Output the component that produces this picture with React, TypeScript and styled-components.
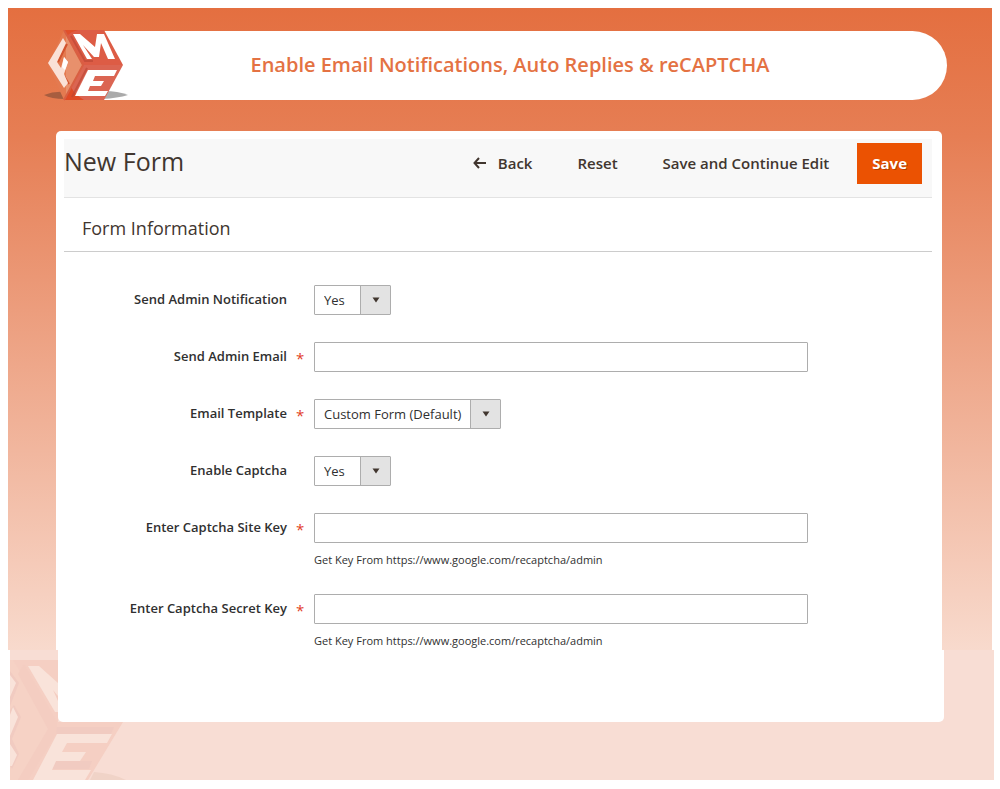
import React from "react";
import styled, { createGlobalStyle } from "styled-components";

const GlobalStyle = createGlobalStyle`
  *, *::before, *::after { box-sizing: border-box; }
  body {
    margin: 0;
    background: #fff;
    font-family: "Open Sans", "Noto Sans", sans-serif;
    font-size: 13px;
    color: #303030;
  }
  h1, h2, p { margin: 0; font-weight: 400; }
  button, input, select { font: inherit; color: inherit; }
`;

const Page = styled.div`
  padding: 8px 0 9px;
`;

const Backdrop = styled.section`
  margin: 0 8px;
  padding: 22px 50px 0 48px;
  background: linear-gradient(#e46f40, #e67e54 20%, #f8dacd);
`;

const Banner = styled.header`
  display: grid;
  grid-template-columns: 1fr;
  margin: 0 0 30px -12px;
`;

const Pill = styled.div`
  grid-area: 1 / 1;
  display: flex;
  align-items: center;
  justify-content: center;
  margin: 1px -5px 0 21px;
  height: 69px;
  padding: 0 0 2px 8px;
  border-radius: 35px;
  background: #fff;
`;

const BannerTitle = styled.h1`
  && { font-weight: 600; }
  font-size: 20px;
  line-height: 28px;
  color: #e47243;
`;

const Logo = styled.svg`
  grid-area: 1 / 1;
  display: block;
  width: 84px;
  height: 71px;
`;

const Panel = styled.main`
  min-height: 519px;
  padding: 8px 10px 0 8px;
  border-radius: 5px 5px 0 0;
  background: #fff;
`;

const Toolbar = styled.div`
  display: flex;
  justify-content: space-between;
  height: 59px;
  padding: 4px 10px 0 0;
  border-bottom: 1px solid #e3e3e3;
  background: #f8f8f8;
`;

const PageTitle = styled.h2`
  font-size: 25px;
  line-height: 36px;
  color: #41362f;
`;

const Actions = styled.div`
  display: flex;
  align-items: flex-start;
`;

const Action = styled.button<{ $primary?: boolean }>`
  display: flex;
  align-items: center;
  gap: 12px;
  height: 41px;
  margin-left: ${(p) => (p.$primary ? "13px" : "15px")};
  padding: 0 14px 2px;
  border: 1px solid ${(p) => (p.$primary ? "#eb5202" : "transparent")};
  background: ${(p) => (p.$primary ? "#eb5202" : "transparent")};
  color: ${(p) => (p.$primary ? "#fff" : "#41362f")};
  font-size: 15px;
  font-weight: ${(p) => (p.$primary ? 700 : 600)};
  text-shadow: ${(p) => (p.$primary ? "1px 1px 0 rgba(0,0,0,.25)" : "none")};
  cursor: pointer;
`;

const SectionTitle = styled.h2`
  padding: 16px 18px 9px;
  border-bottom: 1px solid #ccc;
  font-size: 18px;
  line-height: 28px;
  color: #41362f;
`;

const Form = styled.form`
  display: grid;
  gap: 27px;
  padding: 33px 0 0;
`;

const Row = styled.div`
  display: grid;
  grid-template-columns: 223px minmax(0, 494px);
  column-gap: 27px;
`;

const Label = styled.label<{ $required?: boolean }>`
  position: relative;
  line-height: 29px;
  text-align: right;
  font-weight: 600;

  &::after {
    content: ${(p) => (p.$required ? '"*"' : "none")};
    position: absolute;
    left: calc(100% + 9px);
    top: 2px;
    color: #e2401f;
    font-size: 15px;
    font-weight: 400;
  }
`;

const TextInput = styled.input`
  display: block;
  width: 100%;
  height: 30px;
  padding: 0 9px;
  border: 1px solid #adadad;
  border-radius: 1px;
  background: #fff;
`;

const SelectBox = styled.div`
  position: relative;
  display: inline-block;
  vertical-align: top;
`;

const Select = styled.select`
  display: block;
  appearance: none;
  min-width: 77px;
  height: 30px;
  padding: 0 38px 1px 9px;
  border: 1px solid #adadad;
  border-radius: 1px;
  background: linear-gradient(#adadad, #adadad) right 29px top / 1px 100% no-repeat,
    linear-gradient(#e3e3e3, #e3e3e3) right / 29px 100% no-repeat, #fff;
`;

const Caret = styled.svg`
  position: absolute;
  right: 11px;
  top: 12px;
  width: 8px;
  height: 6px;
  pointer-events: none;
`;

const Note = styled.p`
  margin-top: 9px;
  font-size: 11px;
  line-height: 15px;
`;

const Footer = styled.section`
  position: relative;
  margin: 0 6px 0 10px;
  padding: 0 50px 58px 48px;
  background: #f8ddd4;
`;

const PanelEnd = styled.div`
  position: relative;
  height: 72px;
  border-radius: 0 0 5px 5px;
  background: #fff;
`;

const Watermark = styled.svg`
  position: absolute;
  left: 0;
  bottom: 0;
  width: 120px;
  height: 130px;
`;

function SelectField({ id, options }: { id: string; options: string[] }) {
  return (
    <SelectBox>
      <Select id={id} defaultValue={options[0]}>
        {options.map((o) => (
          <option key={o}>{o}</option>
        ))}
      </Select>
      <Caret viewBox="0 0 8 6" aria-hidden="true">
        <path d="M.5.5h7L4 5.5z" fill="#41362f" />
      </Caret>
    </SelectBox>
  );
}

interface Field {
  id: string;
  label: string;
  required?: boolean;
  options?: string[];
  note?: string;
}

const keyNote = "Get Key From https://www.google.com/recaptcha/admin";

const fields: Field[] = [
  { id: "notify", label: "Send Admin Notification", options: ["Yes"] },
  { id: "email", label: "Send Admin Email", required: true },
  { id: "template", label: "Email Template", required: true, options: ["Custom Form (Default)"] },
  { id: "captcha", label: "Enable Captcha", options: ["Yes"] },
  { id: "site-key", label: "Enter Captcha Site Key", required: true, note: keyNote },
  { id: "secret-key", label: "Enter Captcha Secret Key", required: true, note: keyNote },
];

export default function App() {
  return (
    <>
      <GlobalStyle />
      <Page>
        <Backdrop>
          <Banner>
            <Pill>
              <BannerTitle>Enable Email Notifications, Auto Replies &amp; reCAPTCHA</BannerTitle>
            </Pill>
            <Logo viewBox="44 30 84 71" aria-hidden="true">
              <path d="M44 95q10-4 21-3v7q-14 0-21-4z" fill="#8d5139" opacity=".7" />
              <path d="M104 91q14 0 24 4-10 3-26 4z" fill="#8d8d8d" opacity=".75" />
              <path d="M64 30 83 65 64 100 48 65z" fill="#e47a50" />
              <path d="M64 30 83 65 66 96V34z" fill="#e8906c" />
              <path d="M64 30h40l19 35H83z" fill="#dd5c45" />
              <path d="M64 30h14q-8 2-11 6z" fill="#e0502b" />
              <path d="M83 65h40l-19 35H64z" fill="#db6552" />
              <path d="M64 100l7-13q4 8 13 13z" fill="#df4a26" />
              <path d="M64 30 83 65 64 100" fill="none" stroke="#d95f42" strokeWidth="2" />
              <path d="M71 36 85 61h8M87 68 72 97" fill="none" stroke="#b94434" strokeWidth="2" opacity=".6" />
              <path d="M73 34h7l15 13 2-13h7l11 25h-7l-7-16-2 14h-5L83 45l9 14h-5z" fill="#fff" />
              <path d="M88 70h29l-3 6H95l-2 5h11l-3 5H90l-2 5h20l-3 5H75z" fill="#fff" />
              <path d="M58 62 67 44M62 68l4-8M64 76l5 8" fill="none" stroke="#d2532f" strokeWidth="2" />
              <path d="M63 38l3 5-9 19 4 6 3-11 4 5-4 12 4 9-4 5-16-25z" fill="#fae1d7" />
              <path d="M64 57l4 5-3 8-3-3z" fill="#fff" />
            </Logo>
          </Banner>
          <Panel>
            <Toolbar>
              <PageTitle>New Form</PageTitle>
              <Actions>
                <Action type="button">
                  <svg width="13" height="12" viewBox="0 0 13 12" fill="none" stroke="#41362f" strokeWidth="2" aria-hidden="true">
                    <path d="M6 1 1.500 6 6 11M1.500 6H13" />
                  </svg>
                  Back
                </Action>
                <Action type="button">Reset</Action>
                <Action type="button">Save and Continue Edit</Action>
                <Action type="button" $primary>Save</Action>
              </Actions>
            </Toolbar>
            <SectionTitle>Form Information</SectionTitle>
            <Form>
              {fields.map((f) => (
                <Row key={f.id}>
                  <Label htmlFor={f.id} $required={f.required}>{f.label}</Label>
                  <div>
                    {f.options ? (
                      <SelectField id={f.id} options={f.options} />
                    ) : (
                      <TextInput id={f.id} type="text" required={f.required} />
                    )}
                    {f.note && <Note>{f.note}</Note>}
                  </div>
                </Row>
              ))}
            </Form>
          </Panel>
        </Backdrop>
        <Footer>
          <Watermark viewBox="0 0 120 130" aria-hidden="true">
            <path d="M0 10h48v62h65L78 130H0z" fill="#f5cfc3" />
            <path d="M3 10 43 75 8 130H0V10z" fill="#f6d2c5" />
            <path d="M14 14 47 72v10L18 130H8L38 79 8 24z" fill="#f4cdc1" />
            <path d="M47 77h57l-3 7H46zM46 111h36l-3 8H42z" fill="#f1cbc1" />
            <path d="M0 21l9 12L0 56zM4 55l7 12-9 22 7 15-7 15-2-4V60z" fill="#f1cbc1" />
            <path d="M18 16h11l19 17v29h-3z" fill="#f9e3da" />
            <path d="M43 40l5 6v5z" fill="#f4cdc1" />
            <path d="M0 25l6 8-6 14zM3 57l5 10-8 19V65zM0 94l7 11-5 11H0z" fill="#f9e3da" />
            <path d="M47 84h55l-5 9H57l-5 9h24l-6 9H46l-4 9h39l-6 10H23z" fill="#f9e3da" />
            <path d="M84 122q18 1 32 8H80z" fill="#f0d3c7" />
          </Watermark>
          <PanelEnd />
        </Footer>
      </Page>
    </>
  );
}
